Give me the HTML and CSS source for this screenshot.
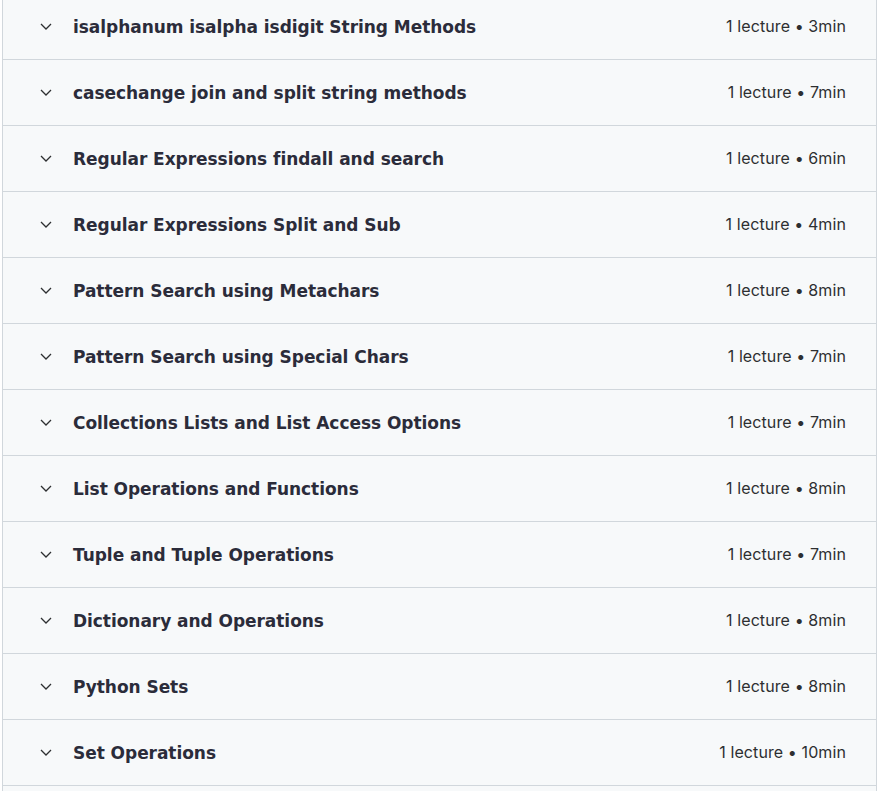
FILE: index.html
```html
<!DOCTYPE html>
<html lang="en">
<head>
<meta charset="utf-8">
<title>Course content</title>
<link rel="stylesheet" href="styles.css">
</head>
<body>
<div class="sections">
  <div class="section"><span class="chev"><svg viewBox="0 0 12 7" width="12" height="7"><path d="M1 1l5 5 5-5" fill="none" stroke="currentColor" stroke-width="1.3"/></svg></span><span class="title">isalphanum isalpha isdigit String Methods</span><span class="meta">1 lecture • 3min</span></div>
  <div class="section"><span class="chev"><svg viewBox="0 0 12 7" width="12" height="7"><path d="M1 1l5 5 5-5" fill="none" stroke="currentColor" stroke-width="1.3"/></svg></span><span class="title">casechange join and split string methods</span><span class="meta">1 lecture • 7min</span></div>
  <div class="section"><span class="chev"><svg viewBox="0 0 12 7" width="12" height="7"><path d="M1 1l5 5 5-5" fill="none" stroke="currentColor" stroke-width="1.3"/></svg></span><span class="title">Regular Expressions findall and search</span><span class="meta">1 lecture • 6min</span></div>
  <div class="section"><span class="chev"><svg viewBox="0 0 12 7" width="12" height="7"><path d="M1 1l5 5 5-5" fill="none" stroke="currentColor" stroke-width="1.3"/></svg></span><span class="title">Regular Expressions Split and Sub</span><span class="meta">1 lecture • 4min</span></div>
  <div class="section"><span class="chev"><svg viewBox="0 0 12 7" width="12" height="7"><path d="M1 1l5 5 5-5" fill="none" stroke="currentColor" stroke-width="1.3"/></svg></span><span class="title">Pattern Search using Metachars</span><span class="meta">1 lecture • 8min</span></div>
  <div class="section"><span class="chev"><svg viewBox="0 0 12 7" width="12" height="7"><path d="M1 1l5 5 5-5" fill="none" stroke="currentColor" stroke-width="1.3"/></svg></span><span class="title">Pattern Search using Special Chars</span><span class="meta">1 lecture • 7min</span></div>
  <div class="section"><span class="chev"><svg viewBox="0 0 12 7" width="12" height="7"><path d="M1 1l5 5 5-5" fill="none" stroke="currentColor" stroke-width="1.3"/></svg></span><span class="title">Collections Lists and List Access Options</span><span class="meta">1 lecture • 7min</span></div>
  <div class="section"><span class="chev"><svg viewBox="0 0 12 7" width="12" height="7"><path d="M1 1l5 5 5-5" fill="none" stroke="currentColor" stroke-width="1.3"/></svg></span><span class="title">List Operations and Functions</span><span class="meta">1 lecture • 8min</span></div>
  <div class="section"><span class="chev"><svg viewBox="0 0 12 7" width="12" height="7"><path d="M1 1l5 5 5-5" fill="none" stroke="currentColor" stroke-width="1.3"/></svg></span><span class="title">Tuple and Tuple Operations</span><span class="meta">1 lecture • 7min</span></div>
  <div class="section"><span class="chev"><svg viewBox="0 0 12 7" width="12" height="7"><path d="M1 1l5 5 5-5" fill="none" stroke="currentColor" stroke-width="1.3"/></svg></span><span class="title">Dictionary and Operations</span><span class="meta">1 lecture • 8min</span></div>
  <div class="section"><span class="chev"><svg viewBox="0 0 12 7" width="12" height="7"><path d="M1 1l5 5 5-5" fill="none" stroke="currentColor" stroke-width="1.3"/></svg></span><span class="title">Python Sets</span><span class="meta">1 lecture • 8min</span></div>
  <div class="section"><span class="chev"><svg viewBox="0 0 12 7" width="12" height="7"><path d="M1 1l5 5 5-5" fill="none" stroke="currentColor" stroke-width="1.3"/></svg></span><span class="title">Set Operations</span><span class="meta">1 lecture • 10min</span></div>
  <div class="section section-next"></div>
</div>
</body>
</html>
```

FILE: styles.css
```css
html, body {
  margin: 0;
  padding: 0;
  background: #ffffff;
  overflow: hidden;
}

.sections {
  margin: -6px 0 0 2px;
  width: 875px;
  box-sizing: border-box;
  border-left: 1px solid #d1d7dc;
  border-right: 1px solid #d1d7dc;
  font-family: Inter, "Liberation Sans", sans-serif;
  color: #2d2f31;
}

.section {
  display: flex;
  align-items: center;
  height: 65px;
  border-bottom: 1px solid #d1d7dc;
  background: #f7f9fa;
  padding: 0 30px 0 37px;
}

.chev {
  display: flex;
  width: 12px;
  height: 7px;
  margin-right: 21px;
  color: #2d2f31;
}

.title {
  flex: 1;
  font-family: "DejaVu Sans", Inter, sans-serif;
  font-weight: 700;
  font-size: 17px;
  letter-spacing: -0.05px;
  color: #2b2c3a;
}

.meta {
  font-size: 16px;
  font-weight: 400;
  letter-spacing: 0.1px;
  margin-top: -2px;
}
```
